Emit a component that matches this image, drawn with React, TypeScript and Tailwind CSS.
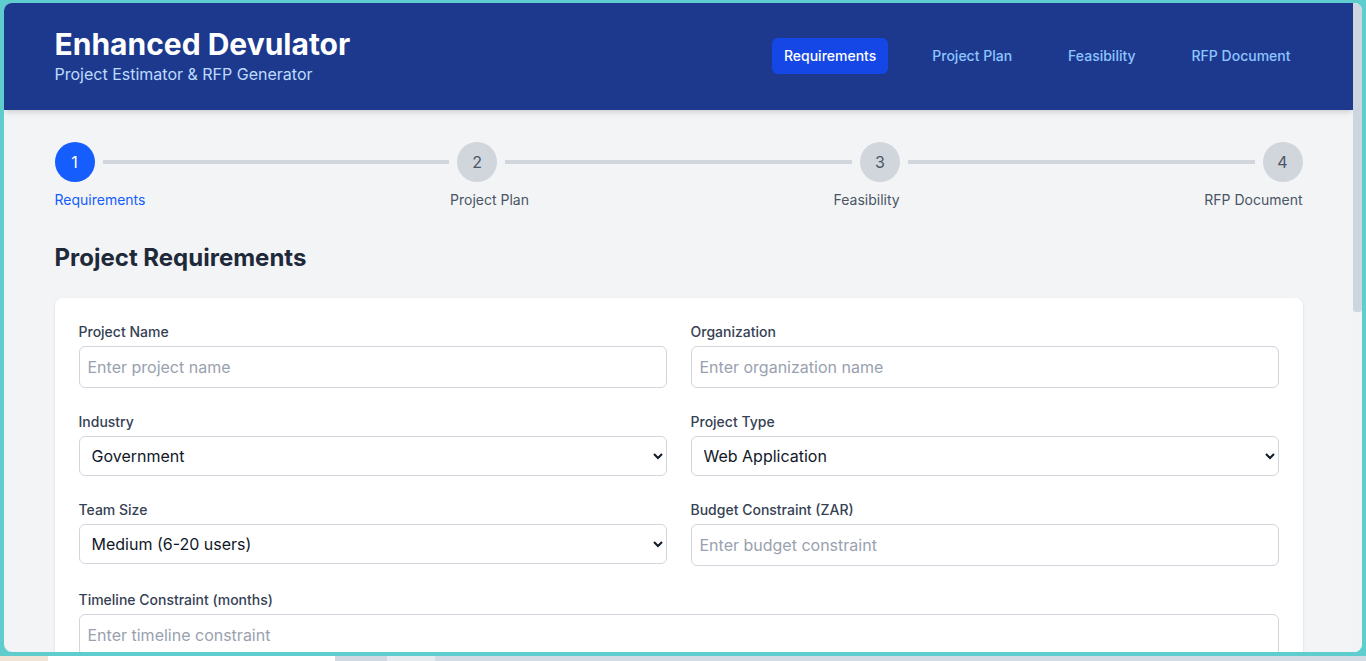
import { FC } from 'react';

const navItems = ['Requirements', 'Project Plan', 'Feasibility', 'RFP Document'];
const steps = ['Requirements', 'Project Plan', 'Feasibility', 'RFP Document'];

const Field: FC<{ label: string; children: React.ReactNode; className?: string }> = ({
  label,
  children,
  className,
}) => (
  <div className={className}>
    <label className="block text-sm font-medium text-gray-700 mb-1">{label}</label>
    {children}
  </div>
);

const inputClass =
  'w-full px-2 py-2 border border-gray-300 rounded-md text-base text-gray-900 bg-white placeholder:text-gray-400 focus:outline-none';

const selectClass =
  'w-full h-10 px-2 border border-gray-300 rounded-md text-base text-gray-900 bg-white focus:outline-none';

export default function App() {
  return (
    <div
      className="h-screen w-full bg-[#5fcdcd] flex flex-col overflow-hidden"
      style={{ fontFamily: 'Inter, "Noto Sans", sans-serif' }}>
      {/* browser window */}
      <div className="flex-1 min-h-0 mx-1 mt-[3px] mb-1 rounded-lg overflow-hidden flex bg-gray-100">
        <div className="flex-1 min-w-0 overflow-hidden">
          {/* Header */}
          <header className="bg-blue-900 shadow-md">
            <div className="max-w-7xl mx-auto px-4 pt-[23px] pb-6 flex items-center justify-between">
              <div>
                <h1 className="text-3xl font-bold text-white">Enhanced Devulator</h1>
                <p className="text-base text-blue-200">Project Estimator &amp; RFP Generator</p>
              </div>
              <nav className="flex gap-8">
                {navItems.map((item, i) => (
                  <button
                    key={item}
                    className={
                      i === 0
                        ? 'px-3 py-2 rounded-md text-sm font-medium bg-blue-700 text-white'
                        : 'px-3 py-2 rounded-md text-sm font-medium text-blue-300'
                    }>
                    {item}
                  </button>
                ))}
              </nav>
            </div>
          </header>

          <main className="max-w-7xl mx-auto px-4 py-8">
            {/* Stepper */}
            <div className="mb-8">
              <div className="flex items-center">
                {steps.map((step, i) => (
                  <div key={step} className={i < steps.length - 1 ? 'flex items-center flex-1' : 'flex items-center'}>
                    <div
                      className={
                        i === 0
                          ? 'w-10 h-10 rounded-full flex items-center justify-center bg-blue-600 text-white text-base'
                          : 'w-10 h-10 rounded-full flex items-center justify-center bg-gray-300 text-gray-600 text-base'
                      }>
                      {i + 1}
                    </div>
                    {i < steps.length - 1 && <div className="flex-1 h-1 mx-2 bg-gray-300" />}
                  </div>
                ))}
              </div>
              <div className="flex justify-between mt-2">
                {steps.map((step, i) => (
                  <span key={step} className={i === 0 ? 'text-sm text-blue-600' : 'text-sm text-gray-600'}>
                    {step}
                  </span>
                ))}
              </div>
            </div>

            <h2 className="text-2xl font-bold text-gray-800 mb-6">Project Requirements</h2>

            {/* Form card */}
            <div className="bg-white rounded-lg shadow p-6">
              <div className="grid grid-cols-2 gap-6">
                <Field label="Project Name">
                  <input className={inputClass} placeholder="Enter project name" />
                </Field>
                <Field label="Organization">
                  <input className={inputClass} placeholder="Enter organization name" />
                </Field>
                <Field label="Industry">
                  <select className={selectClass} defaultValue="Government">
                    <option>Government</option>
                    <option>Finance</option>
                    <option>Healthcare</option>
                    <option>Education</option>
                  </select>
                </Field>
                <Field label="Project Type">
                  <select className={selectClass} defaultValue="Web Application">
                    <option>Web Application</option>
                    <option>Mobile Application</option>
                    <option>Desktop Application</option>
                  </select>
                </Field>
                <Field label="Team Size">
                  <select className={selectClass} defaultValue="Medium (6-20 users)">
                    <option>Small (1-5 users)</option>
                    <option>Medium (6-20 users)</option>
                    <option>Large (21+ users)</option>
                  </select>
                </Field>
                <Field label="Budget Constraint (ZAR)">
                  <input className={inputClass} placeholder="Enter budget constraint" />
                </Field>
                <Field label="Timeline Constraint (months)" className="col-span-2">
                  <input className={inputClass} placeholder="Enter timeline constraint" />
                </Field>
              </div>
            </div>
          </main>
        </div>

        {/* scrollbar */}
        <div className="w-[9px] flex flex-col bg-[#f1f3f5]">
          <div className="h-[309px] bg-[#cdd5df] rounded-b-[3px]" />
        </div>
      </div>

      {/* taskbar strip */}
      <div className="h-[5px] flex shrink-0">
        <div className="w-12 bg-[#efe4d6]" />
        <div className="w-[287px] bg-white" />
        <div className="w-[52px] bg-[#d0d9e2]" />
        <div className="w-12 bg-[#e6ebef]" />
        <div className="flex-1 bg-[#d3dce5]" />
      </div>
    </div>
  );
}
